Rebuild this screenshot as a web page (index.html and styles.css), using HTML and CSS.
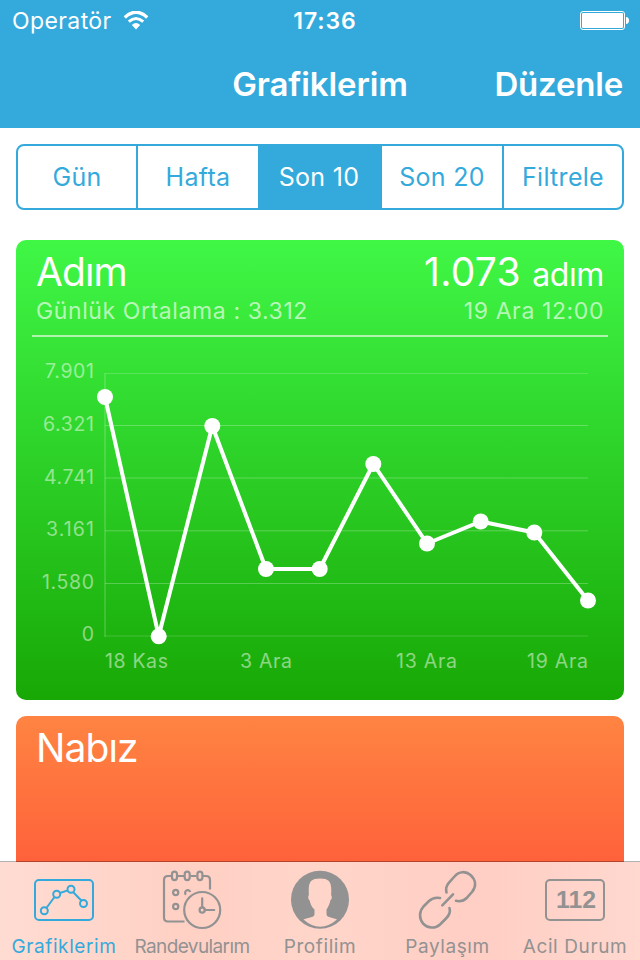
FILE: index.html
```
<!DOCTYPE html>
<html lang="tr">

<head>
    <meta charset="UTF-8">
    <title>Grafiklerim</title>
    <link rel="stylesheet" href="styles.css">
</head>

<body>

    <header class="header">
        <div class="status-bar">
            <div class="carrier">
                <span class="carrier-name">Operatör</span>
                <svg class="wifi" width="26" height="20" viewBox="0 0 26 20">
                    <path d="M1.8 6.4 Q13 -3.8 24.2 6.4" fill="none" stroke="#fff" stroke-width="3.4"></path>
                    <path d="M5.8 10.7 Q13 4.2 20.2 10.7" fill="none" stroke="#fff" stroke-width="3"></path>
                    <path d="M8.8 14.1 Q13 10.1 17.2 14.1 L13 18.5 Z" fill="#fff"></path>
                </svg>
            </div>
            <span class="clock">17:36</span>
            <div class="battery">
                <svg width="50" height="20" viewBox="0 0 50 20">
                    <rect x="0.5" y="0.5" width="44" height="18" rx="2.5" fill="none" stroke="#fff"></rect>
                    <rect x="2" y="2" width="41" height="15" rx="1" fill="#fff"></rect>
                    <path d="M46 6 Q49 6.3 49 9.5 Q49 12.7 46 13 Z" fill="#fff"></path>
                </svg>
            </div>
        </div>
        <div class="nav-bar">
            <h1 class="nav-title">Grafiklerim</h1>
            <span class="nav-action">Düzenle</span>
        </div>
    </header>

    <main class="content">
        <div class="segments">
            <span class="segment">Gün</span>
            <span class="segment">Hafta</span>
            <span class="segment active">Son 10</span>
            <span class="segment">Son 20</span>
            <span class="segment">Filtrele</span>
        </div>

        <section class="card card-steps">
            <div class="card-head">
                <div class="card-row">
                    <h2 class="card-title">Adım</h2>
                    <div class="card-value">1.073 <span class="unit">adım</span></div>
                </div>
                <div class="card-row card-sub">
                    <span class="average">Günlük Ortalama : 3.312</span>
                    <span class="date">19 Ara 12:00</span>
                </div>
            </div>
            <svg class="chart" width="608" height="363" viewBox="16 337 608 363">
                <g class="grid">
                    <path d="M105 373V637" stroke-width="2" opacity="0.6"></path>
                    <path d="M105 373.5H588" opacity="0.7"></path>
                    <path d="M105 425.5H588"></path>
                    <path d="M105 478H588"></path>
                    <path d="M105 530.8H588"></path>
                    <path d="M105 583.5H588"></path>
                    <path d="M105 636H588" stroke-width="2" opacity="0.35"></path>
                </g>
                <g class="axis axis-y">
                    <text x="94" y="378" textLength="49">7.901</text>
                    <text x="94" y="431" textLength="51">6.321</text>
                    <text x="94" y="484" textLength="50">4.741</text>
                    <text x="94" y="536" textLength="48">3.161</text>
                    <text x="94" y="589" textLength="52">1.580</text>
                    <text x="94" y="641">0</text>
                </g>
                <g class="axis">
                    <text x="105" y="668" textLength="63">18 Kas</text>
                    <text x="240" y="668" textLength="52">3 Ara</text>
                    <text x="396" y="668" textLength="61">13 Ara</text>
                    <text x="527" y="668" textLength="61">19 Ara</text>
                </g>
                <polyline class="line" points="105,397 158.7,636 212.3,426 266,569 319.7,569 373.3,464 427,543.5 480.7,521.5 534.3,532.5 588,600.5"></polyline>
                <g class="dots">
                    <circle cx="105" cy="397" r="8"></circle>
                    <circle cx="158.7" cy="636.3" r="8"></circle>
                    <circle cx="212.3" cy="426" r="8"></circle>
                    <circle cx="266" cy="569" r="8"></circle>
                    <circle cx="319.7" cy="569" r="8"></circle>
                    <circle cx="373.3" cy="464" r="8"></circle>
                    <circle cx="427" cy="543.5" r="8"></circle>
                    <circle cx="480.7" cy="521.5" r="8"></circle>
                    <circle cx="534.3" cy="532.5" r="8"></circle>
                    <circle cx="588" cy="600.5" r="8"></circle>
                </g>
            </svg>
        </section>

        <section class="card card-pulse">
            <h2 class="card-title">Nabız</h2>
        </section>
    </main>

    <nav class="tab-bar">
        <div class="tab active">
            <svg class="tab-icon" width="60" height="60" viewBox="0 0 60 60">
                <rect x="1" y="10" width="58" height="40" rx="4"></rect>
                <path d="M12.4 38L20.5 27M26 23L33.8 20.4M39.3 22.3L47.5 30.7"></path>
                <circle cx="10.3" cy="40.8" r="3.5"></circle>
                <circle cx="22.7" cy="24.2" r="3.5"></circle>
                <circle cx="37" cy="19.2" r="3.5"></circle>
                <circle cx="49.5" cy="33.5" r="3.5"></circle>
            </svg>
            <span class="tab-label">Grafiklerim</span>
        </div>
        <div class="tab tab-dates">
            <svg class="tab-icon" width="60" height="60" viewBox="0 0 60 60">
                <path d="M9.5 6H6Q2 6 2 10V47.5Q2 51.5 6 51.5H22.5M15.5 6H22M28.5 6H34.5M41 6H44Q48 6 48 10V19.5"></path>
                <rect x="10" y="1.7" width="5" height="8.4" rx="2.5"></rect>
                <rect x="22.7" y="1.7" width="5" height="8.4" rx="2.5"></rect>
                <rect x="35.4" y="1.7" width="5" height="8.4" rx="2.5"></rect>
                <circle cx="13.7" cy="22.5" r="2.6"></circle>
                <circle cx="13.7" cy="36.5" r="2.6"></circle>
                <path d="M24 24.7A2.6 2.6 0 1 1 28.2 22"></path>
                <circle cx="40.2" cy="40" r="18"></circle>
                <circle cx="40.2" cy="40" r="2.6"></circle>
                <path d="M40.2 37.5V28.3M42.7 40H52.2" stroke-linecap="round"></path>
            </svg>
            <span class="tab-label">Randevularım</span>
        </div>
        <div class="tab tab-profile">
            <svg class="tab-icon" width="60" height="60" viewBox="0 0 60 60">
                <circle class="solid" cx="30" cy="29.7" r="29"></circle>
                <path class="cutout" d="M13.5 49.5C19 47 24.5 48 24.5 44V39.5C21.5 37 20 33 19.7 30.5C18 29.5 17.8 26.5 18.9 25C18 12.5 20 8.5 30 8.5S42 12.5 41.1 25C42.2 26.5 42 29.5 40.3 30.5C40 33 38.5 36.5 36.5 39.5V44C36.5 48 42 47 47 49.5Q30 64 13.5 49.5Z"></path>
            </svg>
            <span class="tab-label">Profilim</span>
        </div>
        <div class="tab tab-share">
            <svg class="tab-icon" width="60" height="60" viewBox="0 0 60 60">
                <g stroke-width="2.6" stroke-linecap="round">
                    <path d="M28.5 22.5C27.5 18.5 28.5 15.5 31 12.7L36.5 6.5C41 1 48 1 52.5 5C58 10 58.5 16.5 54 22L49 27.7C46 30.6 42 31.8 38 30.8"></path>
                    <path d="M22 28C18 27.2 14 28.2 11 31L5.5 36.5C1 41.5 1 48.5 5 53.5C10 58.7 17.5 58.7 22 54.5L28 48.5C31.5 45 32.5 41.5 31.5 38"></path>
                    <path d="M24.3 35.3L35 24.3"></path>
                </g>
            </svg>
            <span class="tab-label">Paylaşım</span>
        </div>
        <div class="tab tab-emergency">
            <svg class="tab-icon" width="60" height="60" viewBox="0 0 60 60">
                <rect x="1" y="10" width="58" height="40" rx="4"></rect>
                <text class="icon-text" x="11" y="38" textLength="40" lengthAdjust="spacingAndGlyphs">112</text>
            </svg>
            <span class="tab-label">Acil Durum</span>
        </div>
    </nav>

</body>

</html>
```
FILE: styles.css
```
* {
    box-sizing: border-box;
}

body {
    margin: 0;
    width: 640px;
    height: 960px;
    display: flex;
    flex-direction: column;
    overflow: hidden;
    background: #fff;
    font-family: Inter, "Liberation Sans", sans-serif;
}

h1,
h2 {
    margin: 0;
    font-weight: 400;
}

.header {
    flex: none;
    height: 128px;
    background: #34aadc;
    color: #fff;
}

.status-bar {
    display: grid;
    grid-template-columns: 1fr auto 1fr;
    align-items: center;
    height: 40px;
    padding: 1px 10px 0 12px;
    font-size: 23px;
}

.carrier {
    display: flex;
    align-items: center;
    gap: 11px;
}

.carrier-name {
    letter-spacing: 0.4px;
}

.clock {
    font-weight: 600;
    letter-spacing: 0.9px;
    padding-left: 8px;
}

.battery {
    display: flex;
    justify-content: flex-end;
}

.nav-bar {
    display: grid;
    grid-template-columns: 1fr auto 1fr;
    align-items: center;
    height: 88px;
    padding: 0 17px;
    font-size: 33px;
}

.nav-title {
    grid-column: 2;
    font-size: 33px;
    font-weight: 600;
    letter-spacing: -0.1px;
}

.nav-action {
    justify-self: end;
    font-weight: 600;
    letter-spacing: -0.2px;
}

.content {
    flex: none;
    height: 734px;
    padding: 16px 16px 0;
    overflow: hidden;
}

.segments {
    display: grid;
    grid-template-columns: 120px 120px 124px 122px 1fr;
    height: 66px;
    margin-bottom: 30px;
    border: 2px solid #34aadc;
    border-radius: 8px;
    overflow: hidden;
}

.segment {
    display: flex;
    align-items: center;
    justify-content: center;
    border-right: 2px solid #34aadc;
    color: #34aadc;
    font-size: 25px;
    letter-spacing: 0.3px;
}

.segment:nth-child(2) {
    border-right: none;
}

.segment:last-child {
    border-right: none;
}

.segment.active {
    background: #34aadc;
    color: #fff;
}

.card {
    height: 460px;
    margin-bottom: 16px;
    border-radius: 10px;
    color: #fff;
}

.card-steps {
    background: linear-gradient(#40f746, #18a806);
}

.card-pulse {
    padding: 8px 20px;
    background: linear-gradient(#ff8442, #ff5e3a 35%, #ff2a28);
}

.card-head {
    height: 97px;
    margin: 0 16px;
    padding: 8px 4px 0;
    border-bottom: 2px solid rgba(255, 255, 255, 0.6);
}

.card-row {
    display: flex;
    justify-content: space-between;
    align-items: baseline;
}

.card-title {
    font-size: 39px;
    line-height: 48px;
    letter-spacing: -0.9px;
}

.card-value {
    font-size: 39px;
    line-height: 48px;
    letter-spacing: 0.3px;
}

.unit {
    font-size: 32px;
    letter-spacing: -0.4px;
}

.card-sub {
    font-size: 23px;
    line-height: 24px;
    letter-spacing: 0.6px;
    color: rgba(255, 255, 255, 0.65);
}

.chart {
    display: block;
}

.grid {
    stroke: rgba(255, 255, 255, 0.25);
    fill: none;
}

.axis {
    fill: rgba(255, 255, 255, 0.5);
    font-size: 19.5px;
}

.axis-y {
    text-anchor: end;
}

.line {
    fill: none;
    stroke: #fff;
    stroke-width: 4;
    stroke-linejoin: round;
}

.dots {
    fill: #fff;
}

.tab-bar {
    flex: none;
    display: flex;
    height: 99px;
    margin-top: -1px;
    border-top: 1px solid rgba(0, 0, 0, 0.3);
    background: linear-gradient(90deg, #ffdcd2, #ffd0c4 30%, #ffd5ca 50%, #ffcec4 75%, #ffd8cf) padding-box;
}

.tab {
    flex: none;
    width: 128px;
    display: flex;
    flex-direction: column;
    align-items: center;
    padding-top: 8px;
    color: #929292;
}

.tab.active {
    color: #34aadc;
}

.tab-icon {
    fill: none;
    stroke: currentColor;
    stroke-width: 2;
}

.tab-label {
    margin-top: 4px;
    font-size: 19px;
    line-height: 26px;
    letter-spacing: 0.6px;
    white-space: nowrap;
}

.tab-dates .tab-icon {
    margin-right: 1px;
    stroke-width: 2.2;
}

.tab-dates .tab-label {
    letter-spacing: -0.6px;
}

.tab-share {
    padding-right: 1px;
}

.tab-emergency {
    padding-right: 2px;
}

.solid {
    fill: currentColor;
    stroke: none;
}

.cutout {
    fill: #ffd5ca;
    stroke: none;
}

.icon-text {
    fill: currentColor;
    stroke: none;
    font-family: "Liberation Sans", sans-serif;
    font-size: 23px;
    font-weight: 700;
}
```
